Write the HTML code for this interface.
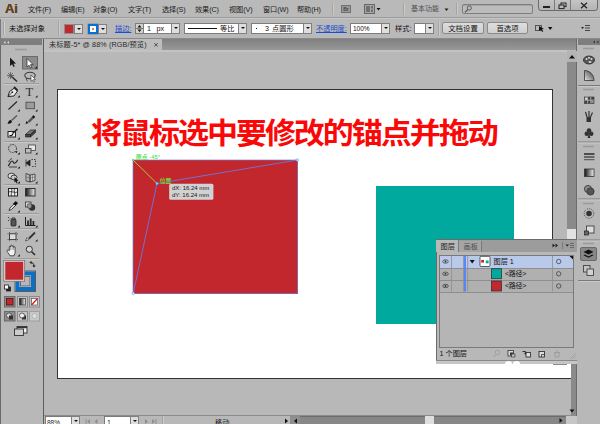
<!DOCTYPE html>
<html lang="zh-CN">
<head>
<meta charset="utf-8">
<title>Ai</title>
<style>
*{box-sizing:border-box;margin:0;padding:0}
html,body{width:600px;height:424px;overflow:hidden;background:#b8b8b8}
body{position:relative;font-family:"Liberation Sans","Noto Sans CJK SC",sans-serif;font-size:8px;color:#1a1a1a;line-height:1}
.a{position:absolute}
.t{position:absolute;white-space:nowrap;line-height:10px;font-size:8px;color:#222}
/* menu bar */
#menubar{left:0;top:0;width:600px;height:18px;background:#b9b9b9;border-bottom:1px solid #9c9c9c}
#ctrlbar{left:0;top:18px;width:600px;height:21px;background:#b9b9b9;border-top:1px solid #c6c6c6;border-bottom:1px solid #8a8a8a}
.dd{position:absolute;background:#fff;border:1px solid #7d7d7d;height:11px}
.ddb{position:absolute;background:#dedede;border:1px solid #808080;height:11px;width:9px}
.ddb:after{content:"";position:absolute;left:1.500px;top:3px;border:2px solid transparent;border-top:2.200px solid #111;border-bottom:0}
.btn{position:absolute;height:12px;border:1px solid #8a8a8a;border-radius:2px;background:linear-gradient(#dedede,#cfcfcf);text-align:center;font-size:7.4px;line-height:11.5px;color:#111}

.m{top:5px;font-size:7.2px;color:#1c1c1c;letter-spacing:-0.1px}
.c{top:23.500px;font-size:7.2px;color:#111}
.lnk{color:#1c4fd0;text-decoration:underline}
.sep{width:2px;background:#a4a4a4;border-right:1px solid #cacaca}
/* tools */
#tools{left:0;top:39px;width:43.500px;height:385px;background:#b8b8b8;border-right:1.500px solid #5c5c5c;border-left:1px solid #6a6a6a}
#toolshead{left:0;top:39px;width:42px;height:6px;background:#7e7e7e}
/* doc */
#tabbar{left:44px;top:39px;width:533px;height:11px;background:linear-gradient(#808080,#989898)}
#tab{left:44px;top:39px;width:118px;height:12px;background:#bdbdbd}
#paste{left:44px;top:50px;width:523px;height:365px;background:#b8b8b8;border-top:2px solid #c3c3c3}
#artboard{left:57px;top:89px;width:496px;height:289.500px;background:#fff;border:1px solid #333}
#vscroll{left:566.500px;top:51px;width:9.300px;height:365px;background:#8a8a8a}
#status{left:44px;top:415.300px;width:533px;height:9px;background:#b8b8b8;border-top:1px solid #8c8c8c}
#dock{left:576.300px;top:39px;width:24px;height:385px;background:#b8b8b8;border-left:1.900px solid #6c6c6c}
#dockhead{left:578px;top:39px;width:22px;height:6px;background:#7e7e7e}
#title{transform:scaleY(.94);transform-origin:0 0;left:91px;top:115.300px;font-size:31px;line-height:42px;font-weight:700;color:#fa0808;white-space:nowrap;letter-spacing:-2.02px}
/* layers */
#layers{left:435.500px;top:239px;width:141.500px;height:125px;background:#b8b8b8;border:1px solid #6a6a6a;border-right:0}
</style>
</head>
<body>
<div id="menubar" class="a"></div>
<div id="ctrlbar" class="a"></div>
<div id="tools" class="a"></div>
<div id="toolshead" class="a"></div>
<div id="tabbar" class="a"></div>
<div id="tab" class="a"></div>
<div id="paste" class="a"></div>
<div id="artboard" class="a"></div>
<div id="vscroll" class="a"></div>
<div class="a" style="left:566.5px;top:364px;width:4px;height:52px;background:#b8b8b8"></div><div class="a" style="left:552px;top:364px;width:18.500px;height:14.500px;background:#fff;border-bottom:1px solid #333"></div><div class="a" style="left:553px;top:364px;width:14px;height:1px;background:#8a8a8a"></div>
<div id="status" class="a"></div>
<div id="dock" class="a"></div>
<div id="dockhead" class="a"></div>


<!-- menu bar -->
<div class="a" style="left:5px;top:2px;font-size:13px;line-height:14px;font-weight:700;color:#64401c;letter-spacing:-0.2px;text-shadow:0 0 0.5px #64401c">Ai</div>
<div class="t m" style="left:28px">文件(F)</div>
<div class="t m" style="left:61px">编辑(E)</div>
<div class="t m" style="left:93px">对象(O)</div>
<div class="t m" style="left:128px">文字(T)</div>
<div class="t m" style="left:162px">选择(S)</div>
<div class="t m" style="left:195px">效果(C)</div>
<div class="t m" style="left:229px">视图(V)</div>
<div class="t m" style="left:263px">窗口(W)</div>
<div class="t m" style="left:297px">帮助(H)</div>
<div class="a sep" style="left:332px;top:3px;height:12px"></div>
<div class="a" style="left:341px;top:5px;width:10px;height:8px;background:#9a9a9a;border:1px solid #6f6f6f;font-size:5px;line-height:6px;text-align:center;color:#444;font-weight:700">Br</div>
<svg class="a" style="left:364px;top:4px" width="20" height="10" viewBox="0 0 20 10"><rect x="0.5" y="0.5" width="10" height="9" fill="#a8a8a8" stroke="#666"/><rect x="2" y="2" width="4" height="6" fill="#707070"/><rect x="7" y="2" width="2" height="2.5" fill="#707070"/><rect x="7" y="5.5" width="2" height="2.5" fill="#707070"/><path d="M12.5 4h4l-2 2.6z" fill="#111"/></svg>
<div class="a sep" style="left:403px;top:3px;height:12px"></div>
<div class="t" style="left:411px;top:4px;color:#4f4f4f;font-size:7px">基本功能</div>
<svg class="a" style="left:444px;top:8px" width="5" height="4"><path d="M0.5 0.5h4l-2 2.5z" fill="#222"/></svg>
<div class="a sep" style="left:456px;top:3px;height:12px"></div>
<div class="a" style="left:462px;top:4px;width:71px;height:10px;border:1px solid #7e7e7e;border-radius:2px;background:#bcbcbc;box-shadow:inset 0 1px 0 #a4a4a4"></div>
<svg class="a" style="left:464px;top:5px" width="9" height="8" viewBox="0 0 9 8"><circle cx="5.3" cy="3" r="2.1" fill="none" stroke="#555" stroke-width="0.9"/><path d="M3.8 4.6L1 7.3" stroke="#555" stroke-width="1.2"/></svg>
<div class="a" style="left:538px;top:-1px;width:60px;height:12px;border:1px solid #6c6c6c;border-radius:0 0 3px 3px;background:linear-gradient(#c4c4c4,#b4b4b4)"></div>
<div class="a" style="left:554px;top:0;width:1px;height:10px;background:#7a7a7a"></div>
<div class="a" style="left:570px;top:0;width:1px;height:10px;background:#7a7a7a"></div>
<div class="a" style="left:543px;top:6px;width:6.500px;height:1.600px;background:#222"></div>
<svg class="a" style="left:558px;top:2px" width="9" height="8" viewBox="0 0 9 8"><rect x="3" y="1" width="5" height="3.600" fill="none" stroke="#222" stroke-width="1"/><rect x="1" y="3" width="5" height="3.600" fill="#bbb" stroke="#222" stroke-width="1"/></svg>
<svg class="a" style="left:580px;top:2px" width="8" height="7" viewBox="0 0 8 7"><path d="M1 0.8L7 6.2M7 0.8L1 6.2" stroke="#222" stroke-width="1.200"/></svg>

<!-- control bar -->
<div class="a" style="left:0;top:19px;width:1px;height:20px;background:#7a7a7a"></div>
<div class="a" style="left:3px;top:22px;width:2px;height:13px;background:#a2a2a2;border-right:1px solid #cfcfcf"></div>
<div class="t c" style="left:9px">未选择对象</div>
<div class="a sep" style="left:58px;top:21px;height:15px"></div>
<div class="a" style="left:64px;top:24px;width:10px;height:10px;background:#c1272d;border:1px solid #8d8d8d"></div>
<div class="ddb" style="left:74px;top:24px;height:10px"></div>
<div class="a" style="left:88px;top:24px;width:10px;height:9.500px;background:#fff;border:2.400px solid #0a70d0;box-shadow:0 0 0 0.5px #888"></div>
<div class="a" style="left:91.700px;top:27.500px;width:2.800px;height:2.600px;background:#c4c4c4;border:.5px solid #999"></div>
<div class="ddb" style="left:98px;top:24px;height:10px"></div>
<div class="t c lnk" style="left:115px">描边:</div>
<div class="a" style="left:135px;top:23px;width:9px;height:11px;background:#d0d0d0;border:1px solid #7d7d7d"></div>
<svg class="a" style="left:135px;top:23px" width="9" height="11"><path d="M2.5 4.5h4l-2-2.6zM2.5 6.5h4l-2 2.6z" fill="#111"/><path d="M1 5.5h7" stroke="#7d7d7d" stroke-width="1"/></svg>
<div class="dd" style="left:143px;top:23px;width:29px"></div>
<div class="t c" style="left:147px;word-spacing:3.5px">1 px</div>
<div class="ddb" style="left:171px;top:23px"></div>
<div class="dd" style="left:184px;top:23px;width:55px"></div>
<div class="a" style="left:188px;top:28px;width:29px;height:1px;background:#111"></div>
<div class="t c" style="left:220px">等比</div>
<div class="ddb" style="left:238px;top:23px"></div>
<div class="dd" style="left:251px;top:23px;width:53px"></div>
<div class="a" style="left:256px;top:28px;width:1px;height:1px;background:#111"></div>
<div class="t c" style="left:265px">3</div>
<div class="t c" style="left:272px">点圆形</div>
<div class="ddb" style="left:303px;top:23px"></div>
<div class="t c lnk" style="left:316px">不透明度:</div>
<div class="dd" style="left:350px;top:23px;width:32px"></div>
<div class="t c" style="left:353px;font-size:6.5px">100%</div>
<div class="ddb" style="left:381px;top:23px"></div>
<div class="t c" style="left:395px">样式:</div>
<div class="dd" style="left:414px;top:23px;width:12px"></div>
<div class="ddb" style="left:425px;top:23px"></div>
<div class="a sep" style="left:438px;top:21px;height:15px"></div>
<div class="btn" style="left:442px;top:22px;width:42px">文档设置</div>
<div class="btn" style="left:487px;top:22px;width:41px">首选项</div>
<svg class="a" style="left:534px;top:23px" width="20" height="11" viewBox="0 0 20 11"><rect x="1.5" y="2.5" width="6" height="5" fill="none" stroke="#555" stroke-width="1"/><path d="M5 3l5 3-2 .3 1.2 2.2-1 .5-1.2-2.2L5 8z" fill="#111"/><path d="M14 4h4.4l-2.2 3z" fill="#111"/></svg>
<svg class="a" style="left:581px;top:24px" width="10" height="8" viewBox="0 0 10 8"><path d="M0 3h3l-1.5 2z" fill="#222"/><path d="M4 1.5h5M4 4h5M4 6.5h5" stroke="#444" stroke-width="1"/></svg>

<!-- doc tab -->
<div class="t" style="left:49px;top:40px;font-size:7.2px;color:#2a2a2a;letter-spacing:.12px">未标题-5* @ 88% (RGB/预览)</div>
<svg class="a" style="left:153px;top:42px" width="6" height="6"><path d="M1.2 1.200l3.600 3.300M4.800 1.200l-3.600 3.300" stroke="#3a3a3a" stroke-width=".8"/></svg>

<!-- tools panel icons -->
<svg class="a" style="left:0;top:0" width="44" height="424" viewBox="0 0 44 424">
<g id="toolicons">
<path d="M5.5 41l-2 1.5 2 1.500zM9 41l-2 1.500 2 1.500z" fill="#d8d8d8"/>
<path d="M15 49.500h12" stroke="#9a9a9a" stroke-width="1.500"/>
<!-- row1 -->
<path d="M10 57.500l6 6-2.600.2 1.400 2.600-1.300.7-1.400-2.700L10 66z" fill="#1a1a1a"/>
<rect x="22.500" y="56.500" width="15" height="12.500" fill="#8c8c8c" stroke="#6a6a6a"/>
<path d="M27 58.500l6 6-2.600.2 1.400 2.600-1.300.7-1.400-2.700L27 67z" fill="#fff" stroke="#222" stroke-width=".7"/>
<path d="M37 66.300v2.200h-2.200z" fill="#111"/>
<!-- row2 wand / lasso -->
<path d="M11 76l6 5.500" stroke="#2a2a2a" stroke-width="1.600"/>
<path d="M10.500 72v7M7 75.500h7M8 73l5 5M13 73l-5 5" stroke="#555" stroke-width=".8"/>
<ellipse cx="30" cy="75.500" rx="5.200" ry="3.300" fill="none" stroke="#3a3a3a" stroke-width="1.100"/>
<path d="M27 78c-1 1.500-.5 2.500.5 3" fill="none" stroke="#3a3a3a" stroke-width="1"/>
<path d="M31 75l4.500 4.500-2 .1 1 2-1 .5-1-2-1.500 1.300z" fill="#fff" stroke="#333" stroke-width=".6"/>
<path d="M4 83.500h35" stroke="#9c9c9c"/><path d="M4 84.500h35" stroke="#c8c8c8"/>
<!-- row3 pen / type -->
<path d="M8 96.500l1.500-5 5-3.500 3 3-3.500 5z" fill="#e8e8e8" stroke="#222" stroke-width="1"/>
<path d="M8 96.500l4-4" stroke="#222" stroke-width=".8"/><circle cx="12.300" cy="92.200" r=".9" fill="#222"/>
<path d="M14 87l3.500 3.500" stroke="#222" stroke-width="1.800"/>
<path d="M19.800 95.3v2.200h-2.200z" fill="#111"/>
<text x="25.600" y="95.500" font-family="Liberation Serif,serif" font-size="12.500" fill="#2e2e2e">T</text>
<path d="M37.500 95.3v2.200h-2.200z" fill="#111"/>
<!-- row4 line / rect -->
<path d="M8.500 109.500l8.500-8" stroke="#222" stroke-width="1.100"/>
<path d="M19.800 109.3v2.200h-2.200z" fill="#111"/>
<rect x="26" y="102.200" width="8.500" height="6.500" fill="#9c9c9c" stroke="#505050" stroke-width=".9"/>
<path d="M37.500 109.3v2.200h-2.200z" fill="#111"/>
<!-- row5 brush / pencil -->
<path d="M17 115.500l-5.500 5" stroke="#555" stroke-width="1.300"/>
<path d="M7.500 123.500c1.500.5 4 0 4.500-2l-1.500-1.500c-1.500 0-2 2-3 3.500z" fill="#111"/>
<path d="M19.800 123.3v2.200h-2.200z" fill="#111"/>
<path d="M34.300 116.200l-5.800 5.800" stroke="#555" stroke-width="2.400"/>
<path d="M34.300 116.200l-1.400 1.400" stroke="#1a1a1a" stroke-width="2.400"/>
<path d="M25.500 124l1-3 2 2z" fill="#111"/>
<path d="M37.500 123.3v2.200h-2.200z" fill="#111"/>
<!-- row6 blob / eraser -->
<rect x="8" y="131.500" width="7.500" height="5.500" fill="#eee" stroke="#222" stroke-width="1"/>
<path d="M17.500 129l-5 4.500" stroke="#222" stroke-width="1.600"/>
<path d="M9.500 135.500c1 .5 3 0 3.200-1.500" stroke="#111" stroke-width="1.200" fill="none"/>
<path d="M19.800 137.3v2.200h-2.200z" fill="#111"/>
<path d="M25.500 134.500l5-4.500h5l-5 4.500z" fill="#777" stroke="#222" stroke-width=".7"/>
<path d="M25.500 134.500h5v2.500h-5zM30.500 134.500l5-4.500v2.500l-5 4.500z" fill="#444" stroke="#222" stroke-width=".7"/>
<path d="M37.500 137.3v2.200h-2.200z" fill="#111"/>
<path d="M4 141.500h35" stroke="#9c9c9c"/><path d="M4 142.500h35" stroke="#c8c8c8"/>
<!-- row7 rotate / scale -->
<circle cx="12.500" cy="148.500" r="4" fill="none" stroke="#333" stroke-width="1" stroke-dasharray="1.600 1"/>
<path d="M15 151.500l2.500-.5-1 2.300z" fill="#111"/>
<path d="M19.800 152.3v2.200h-2.200z" fill="#111"/>
<rect x="28.500" y="145" width="7" height="5.500" fill="#e6e6e6" stroke="#444" stroke-width=".8"/>
<rect x="25.500" y="148.500" width="5.500" height="4.500" fill="#bdbdbd" stroke="#333" stroke-width=".8"/>
<path d="M37.500 152.3v2.200h-2.200z" fill="#111"/>
<!-- row8 warp / free transform -->
<path d="M8 166c2-1 2-5 4-5s1 3 3 2 2-3 3-3" fill="none" stroke="#222" stroke-width="1.100"/>
<path d="M8.500 162c1-2 2-3 3.500-3.500M9 167h8" fill="none" stroke="#333" stroke-width=".9"/>
<path d="M19.800 166.3v2.200h-2.200z" fill="#111"/>
<path d="M26 159.500v7M26 163l4-3v6z" fill="#222" stroke="#222" stroke-width=".8"/>
<path d="M31.500 159.500h4v7h-4" fill="none" stroke="#333" stroke-width="1" stroke-dasharray="1.300 1.300"/>
<!-- row9 shape builder / perspective -->
<ellipse cx="11.500" cy="176" rx="3.600" ry="2.800" fill="#ddd" stroke="#333" stroke-width=".9"/>
<ellipse cx="14" cy="177.500" rx="3" ry="2.400" fill="#ccc" stroke="#333" stroke-width=".9"/>
<path d="M14.500 177l4 4-1.800.1.900 1.900-.9.400-.9-1.900-1.300 1z" fill="#111"/>
<path d="M19.800 181.3v2.200h-2.200z" fill="#111"/>
<path d="M26 173.500l4 1.500v7l-4-1zM30 175l5-1v6.500l-5 1.500z" fill="#d0d0d0" stroke="#333" stroke-width=".8"/>
<path d="M26 177l4 1 5-1M28 174.200v7M32.500 174.500v7" stroke="#555" stroke-width=".5" fill="none"/>
<path d="M37.500 181.3v2.200h-2.200z" fill="#111"/>
<path d="M4 184.500h35" stroke="#9c9c9c"/><path d="M4 185.500h35" stroke="#c8c8c8"/>
<!-- row10 mesh / gradient -->
<rect x="8.500" y="188.500" width="9" height="7.500" fill="#eee" stroke="#222" stroke-width="1"/>
<path d="M8.500 192c3-1.500 6 1.500 9 0M11.500 188.500c1 2.500-1 5 0 7.500M14.500 188.500c-1 2.500 1 5 0 7.500" fill="none" stroke="#222" stroke-width=".8"/>
<defs><linearGradient id="gr1" x1="0" x2="1"><stop offset="0" stop-color="#111"/><stop offset="1" stop-color="#f4f4f4"/></linearGradient></defs>
<rect x="25.500" y="188.500" width="9.500" height="7.500" fill="url(#gr1)" stroke="#333" stroke-width="1"/>
<!-- row11 eyedropper / blend -->
<path d="M9 210.500l1-2.500 4-4 1.500 1.500-4 4z" fill="#ddd" stroke="#222" stroke-width=".8"/>
<path d="M13.500 203.500l2.500-2 1.500 1.500-2 2.500z" fill="#111" stroke="#111" stroke-width=".8"/>
<path d="M19.800 210.3v2.200h-2.200z" fill="#111"/>
<rect x="25.500" y="202" width="5.500" height="5" fill="#ddd" stroke="#333" stroke-width=".8"/>
<circle cx="32" cy="207.500" r="3.200" fill="#333"/>
<circle cx="29.500" cy="206" r="2.400" fill="#999" stroke="#333" stroke-width=".6"/>
<path d="M4 213.500h35" stroke="#9c9c9c"/><path d="M4 214.500h35" stroke="#c8c8c8"/>
<!-- row12 sprayer / graph -->
<rect x="11" y="219.500" width="5" height="6.500" rx="1" fill="#555" stroke="#222" stroke-width=".8"/>
<path d="M12 219.500v-1.500h3v1.500" fill="none" stroke="#222" stroke-width=".9"/>
<path d="M8 217.500h1M9.500 219h1M8 220.500h1" stroke="#333" stroke-width=".9"/>
<path d="M19.800 225.3v2.200h-2.200z" fill="#111"/>
<path d="M25.500 217v8.500h10" fill="none" stroke="#222" stroke-width="1"/>
<path d="M28 225v-4.500M30.700 225v-6.500M33.400 225v-4" stroke="#2a2a2a" stroke-width="1.800"/>
<path d="M37.500 225.3v2.200h-2.200z" fill="#111"/>
<path d="M4 228.500h35" stroke="#9c9c9c"/><path d="M4 229.500h35" stroke="#c8c8c8"/>
<!-- row13 artboard / slice -->
<rect x="9.500" y="233.800" width="6.500" height="5.800" fill="#dcdcdc" stroke="#333" stroke-width=".9"/>
<path d="M7.500 233.800h1.200M16.800 233.800h1.200M7.500 239.600h1.200M16.800 239.600h1.200M9.500 232v1M16 232v1M9.500 240.400v1M16 240.400v1" stroke="#333" stroke-width=".7"/>
<path d="M35 232.500l-6 6" stroke="#333" stroke-width="1.800"/>
<path d="M25.500 241l1.500-3.500 2 2z" fill="#eee" stroke="#333" stroke-width=".7"/>
<path d="M37.500 239.3v2.200h-2.200z" fill="#111"/>
<!-- row14 hand / zoom -->
<path d="M10 255.800c-1-2.200-3-3.800-3-5s1.200-1.200 2.300 0v-3.800c0-1.100 1.400-1.100 1.400 0v-1c0-1.100 1.500-1.100 1.500 0v.5c0-1.100 1.500-1.100 1.500 0v1c0-1.100 1.400-1.100 1.400 0v5.300l-1.100 3z" fill="#f2f2f2" stroke="#2a2a2a" stroke-width=".8"/><path d="M10.700 247v3M12.200 246.500v3.500M13.700 247v3" stroke="#555" stroke-width=".5"/>
<path d="M19.800 254.3v2.200h-2.200z" fill="#111"/>
<circle cx="29.300" cy="249.300" r="3.100" fill="#d4d4d4" stroke="#333" stroke-width="1"/>
<path d="M31.700 251.700l3.300 3.300" stroke="#2a2a2a" stroke-width="1.600"/>
<path d="M4 258.500h35" stroke="#9c9c9c"/><path d="M4 259.500h35" stroke="#c8c8c8"/>
<!-- fill / stroke -->
<rect x="15" y="271" width="20.500" height="20.500" fill="#dcdcdc" stroke="#5a5a5a" stroke-width="1"/>
<rect x="17.500" y="273.500" width="15.500" height="15.500" fill="none" stroke="#0d6fc6" stroke-width="4"/>
<rect x="20.500" y="276.500" width="9.500" height="9.500" fill="#b8b8b8" stroke="#666" stroke-width="1"/>
<rect x="4.500" y="261" width="19.500" height="19.500" fill="#c1272d" stroke="#e0e0e0" stroke-width="1.500"/>
<rect x="3.800" y="260.300" width="20.900" height="20.900" fill="none" stroke="#666" stroke-width=".7"/>
<path d="M30 262.500c3 0 4 1 4 4" fill="none" stroke="#222" stroke-width="1"/>
<path d="M31.500 260.800l-2 1.700 2 1.700zM32.300 265.500l1.700 2 1.700-2z" fill="#222"/>
<rect x="6.500" y="287" width="4" height="4" fill="#222" stroke="#222" stroke-width=".8"/>
<rect x="4.500" y="285" width="4" height="4" fill="#fff" stroke="#222" stroke-width=".8"/>
<!-- color mode buttons -->
<rect x="4.500" y="296.500" width="10.500" height="10.500" fill="#8c8c8c" stroke="#6a6a6a"/>
<rect x="6.500" y="298.500" width="6.500" height="6.500" fill="#c1272d" stroke="#4a1515" stroke-width=".8"/>
<rect x="17.500" y="296.500" width="10" height="10.500" fill="#c4c4c4" stroke="#8a8a8a"/>
<rect x="19.500" y="298.500" width="6" height="6.500" fill="url(#gr1)" stroke="#333" stroke-width=".7"/>
<rect x="29.500" y="296.500" width="10" height="10.500" fill="#c4c4c4" stroke="#8a8a8a"/>
<rect x="31.500" y="298.500" width="6" height="6.500" fill="#fff" stroke="#555" stroke-width=".7"/>
<path d="M31.500 305l6-6.500" stroke="#e01818" stroke-width="1.200"/>
<!-- draw modes -->
<rect x="4.500" y="311.500" width="10.500" height="9.500" fill="#8c8c8c" stroke="#6a6a6a"/>
<circle cx="9" cy="315.500" r="2.500" fill="#ddd" stroke="#333" stroke-width=".7"/><rect x="9" y="315.500" width="4" height="4" fill="#333"/>
<rect x="17.500" y="311.500" width="10" height="9.500" fill="#c4c4c4" stroke="#8a8a8a"/>
<rect x="22" y="315.500" width="4" height="4" fill="#333"/><circle cx="22" cy="315.500" r="2.500" fill="#eee" stroke="#333" stroke-width=".7"/>
<rect x="29.500" y="311.500" width="10" height="9.500" fill="#c8c8c8" stroke="#a0a0a0"/>
<circle cx="34.500" cy="316" r="2.500" fill="#ddd" stroke="#aaa" stroke-width=".7"/>
<!-- screen mode -->
<rect x="17" y="326.500" width="10" height="6.500" fill="#eee" stroke="#333" stroke-width=".9"/>
<rect x="14.500" y="329" width="9" height="6.500" fill="#ccc" stroke="#333" stroke-width=".9"/>
<path d="M17 327.500h10" stroke="#333" stroke-width="1.400"/>
</g>
</svg>

<!-- right dock icons -->
<svg class="a" style="left:560px;top:0" width="40" height="424" viewBox="560 0 40 424">
<path d="M595 40.500l-2 1.500 2 1.500zM598.500 40.500l-2 1.500 2 1.500z" fill="#3a3a3a"/>
<path d="M583 48.500h11" stroke="#9a9a9a" stroke-width="1.500"/>
<!-- color palette -->
<ellipse cx="589" cy="60" rx="5.500" ry="4" fill="#555" stroke="#222" stroke-width=".8"/>
<circle cx="586.500" cy="59" r="1" fill="#ddd"/><circle cx="589" cy="57.800" r="1" fill="#ddd"/><circle cx="591.500" cy="59" r="1" fill="#ddd"/><ellipse cx="590" cy="62" rx="1.600" ry="1" fill="#ccc"/>
<!-- color guide -->
<defs><linearGradient id="gr2" x1="0" x2="1" y1="1" y2="0"><stop offset="0" stop-color="#e8e8e8"/><stop offset="1" stop-color="#333"/></linearGradient></defs>
<path d="M584.500 80.500v-10c5 0 9.500 4 9.500 10z" fill="url(#gr2)" stroke="#333" stroke-width=".8"/>
<path d="M578 85.500h22" stroke="#7a7a7a"/><path d="M578 86.500h22" stroke="#c8c8c8"/>
<path d="M583 89.500h11" stroke="#9a9a9a" stroke-width="1.500"/>
<!-- swatches -->
<rect x="584.500" y="97" width="9.500" height="6.500" fill="#444" stroke="#333" stroke-width=".6"/>
<path d="M584.500 100.200h9.500M587.600 97v6.500M590.800 97v6.500" stroke="#ccc" stroke-width=".7"/>
<rect x="585" y="97.500" width="2.200" height="2.300" fill="#ddd"/><rect x="591.200" y="100.600" width="2.300" height="2.400" fill="#999"/>
<!-- brushes -->
<rect x="586.500" y="117" width="4.500" height="5" fill="#333"/>
<path d="M587 117l-1.500-5M589 117v-6M590.500 117l2-4.500" stroke="#333" stroke-width="1.200"/>
<!-- symbols (club) -->
<circle cx="589" cy="130.500" r="2.300" fill="#333"/><circle cx="586.800" cy="133.800" r="2.300" fill="#333"/><circle cx="591.200" cy="133.800" r="2.300" fill="#333"/>
<path d="M589 133l-1.500 5h3z" fill="#333"/>
<path d="M578 142h22" stroke="#7a7a7a"/><path d="M578 143h22" stroke="#c8c8c8"/>
<path d="M583 146.500h11" stroke="#9a9a9a" stroke-width="1.500"/>
<!-- stroke -->
<path d="M584 154h10.500" stroke="#333" stroke-width="1.600"/><path d="M584 157h10.500" stroke="#333" stroke-width="1.200"/><path d="M584 159.700h10.500" stroke="#333" stroke-width=".8"/>
<!-- gradient -->
<rect x="584.500" y="169" width="9.500" height="7.500" fill="url(#gr1)" stroke="#333" stroke-width=".8"/>
<!-- transparency -->
<circle cx="588" cy="189" r="3.600" fill="#888" stroke="#333" stroke-width=".8"/><circle cx="590.500" cy="191.500" r="3.600" fill="#555" stroke="#333" stroke-width=".8"/>
<path d="M578 199h22" stroke="#7a7a7a"/><path d="M578 200h22" stroke="#c8c8c8"/>
<path d="M583 203.500h11" stroke="#9a9a9a" stroke-width="1.500"/>
<!-- appearance -->
<circle cx="589" cy="213.500" r="4.800" fill="none" stroke="#444" stroke-width=".9" stroke-dasharray="1 1"/><circle cx="589" cy="213.500" r="2.800" fill="#333"/>
<!-- graphic styles -->
<rect x="586.500" y="226" width="7.500" height="7" fill="#ddd" stroke="#333" stroke-width=".8"/>
<rect x="584.500" y="231" width="4" height="4" fill="#666" stroke="#222" stroke-width=".7"/>
<path d="M578 240h22" stroke="#7a7a7a"/><path d="M578 241h22" stroke="#c8c8c8"/>
<path d="M583 243.500h11" stroke="#9a9a9a" stroke-width="1.500"/>
<!-- layers (active) -->
<rect x="580.500" y="247.500" width="16" height="13" rx="1.500" fill="#888" stroke="#6a6a6a"/>
<path d="M588.500 249.500l5 2.500-5 2.500-5-2.500z" fill="#111"/>
<path d="M583.500 255.200l1.300-.7 3.700 1.900 3.700-1.900 1.300.7-5 2.600z" fill="#111"/>
<!-- artboards -->
<rect x="583.500" y="265.500" width="6.500" height="6.500" fill="#c4c4c4" stroke="#444" stroke-width=".9"/>
<rect x="587" y="269" width="6.500" height="6.500" fill="#d2d2d2" stroke="#444" stroke-width=".9"/>
<path d="M578 280.500h22" stroke="#7a7a7a"/><path d="M578 281.500h22" stroke="#c8c8c8"/>
</svg>

<!-- scrollbars / status -->
<div class="a" style="left:567px;top:51px;width:10px;height:11px;background:#b4b4b4"></div>
<svg class="a" style="left:567px;top:51px" width="10" height="11"><path d="M2 7.500h6l-3-3.500z" fill="#111"/></svg>
<div class="a" style="left:566.5px;top:229px;width:9.300px;height:9.500px;background:#e2e2e2"></div>
<svg class="a" style="left:567px;top:405px" width="10" height="11"><path d="M2.500 4.500h5l-2.500 3z" fill="#111"/></svg>
<div class="a" style="left:45px;top:416px;width:27px;height:9px;background:#fff;border:1px solid #7a7a7a"></div>
<div class="t" style="left:47px;top:417.500px;font-size:6.500px">88%</div>
<div class="ddb" style="left:71px;top:416px"></div>
<svg class="a" style="left:84px;top:417px" width="80" height="7" viewBox="84 417 80 7"><g fill="#8e8e8e"><path d="M85.500 419h1v5h-1zM90 419v5l-3-2.500zM97.500 419v5l-3-2.500z"/><path d="M145 419v5l3-2.500zM152 419v5l3-2.500zM155.500 419h1v5h-1z"/></g></svg>
<div class="a" style="left:104px;top:416px;width:27px;height:9px;background:#fff;border:1px solid #7a7a7a"></div>
<div class="t" style="left:107px;top:417.500px;font-size:7px">1</div>
<div class="ddb" style="left:130px;top:416px"></div>
<div class="a sep" style="left:162px;top:416px;height:8px"></div>
<div class="t" style="left:215px;top:418px;font-size:7.200px;color:#222">移动</div>
<svg class="a" style="left:284px;top:417px" width="5" height="7"><path d="M1 1.500v5l3-2.500z" fill="#111"/></svg>
<div class="a" style="left:289.500px;top:416px;width:277px;height:8px;background:#878787;border-top:1px solid #6c6c6c;border-left:1px solid #6c6c6c"></div>
<div class="a" style="left:290px;top:416px;width:10px;height:8px;background:#8e8e8e"></div>
<svg class="a" style="left:292px;top:417px" width="6" height="7"><path d="M5 1.500v5l-3-2.500z" fill="#111"/></svg>
<div class="a" style="left:425px;top:416px;width:9px;height:8px;background:#dedede"></div>
<svg class="a" style="left:558px;top:417px" width="6" height="7"><path d="M1.500 1v5l3-2.500z" fill="#111"/></svg>
<div class="a" style="left:566px;top:416px;width:11px;height:8px;background:#c6c6c6"></div>
<!-- artwork -->
<div id="title" class="a">将鼠标选中要修改的锚点并拖动</div>
<div class="a" style="left:133px;top:160px;width:164.5px;height:133.5px;background:#c1272d"></div>
<div class="a" style="left:375.5px;top:185.5px;width:138px;height:138.5px;background:#00a99d"></div>


<!-- selection overlay -->
<svg class="a" style="left:120px;top:150px" width="200" height="150" viewBox="120 150 200 150">
<rect x="133" y="160" width="164.500" height="133.500" fill="none" stroke="#6f7fd8" stroke-width=".7"/>
<path d="M133.200 293.500L157 183.500 297.500 160" fill="none" stroke="#6a78e0" stroke-width=".9"/>
<path d="M133 160L157 183.500" stroke="#a8d838" stroke-width=".9"/>
<path d="M132 159l2 2M134 159l-2 2" stroke="#5fe048" stroke-width=".8"/>
<rect x="156" y="182.500" width="2" height="2" fill="#9fd6ff" stroke="#4fa0e8" stroke-width=".5"/>
<circle cx="297.300" cy="160" r="1.200" fill="#fff" stroke="#5a70e8" stroke-width=".6"/>
<circle cx="133.200" cy="293.300" r="1.200" fill="#fff" stroke="#5a70e8" stroke-width=".6"/>
<text x="135.800" y="159" font-size="5.900" font-weight="500" fill="#3fdc3a" font-family="Liberation Sans,Noto Sans CJK SC,sans-serif">原点 -45°</text>
<text x="159.700" y="182.600" font-size="5.900" font-weight="500" fill="#6fe63a" font-family="Liberation Sans,Noto Sans CJK SC,sans-serif">位置</text>
<rect x="169.200" y="183.800" width="44.200" height="16" rx="1.500" fill="#d2d2d2"/>
<text x="172" y="190.300" font-size="6" fill="#151515" font-family="Liberation Sans,sans-serif">dX: 16.24 mm</text>
<text x="172" y="197.400" font-size="6" fill="#151515" font-family="Liberation Sans,sans-serif">dY: 16.24 mm</text>
</svg>
<div id="layers" class="a"></div>
<!-- layers panel -->
<div class="a" style="left:436px;top:240px;width:141px;height:11.500px;background:#9c9c9c"></div>
<div class="a" style="left:436px;top:240px;width:23px;height:12px;background:#b8b8b8;border-right:1px solid #7a7a7a"></div>
<div class="a" style="left:459px;top:240.500px;width:23px;height:11px;background:#a6a6a6;border-right:1px solid #7a7a7a"></div>
<div class="t" style="left:440.500px;top:241.500px;font-size:7.200px;color:#222">图层</div>
<div class="t" style="left:463.500px;top:241.500px;font-size:7.200px;color:#4e4e4e">画板</div>
<svg class="a" style="left:550px;top:241px" width="27" height="9" viewBox="550 241 27 9"><path d="M552.500 243.500v4l2.500-2zM555.500 243.500v4l2.500-2z" fill="#222"/><path d="M562.500 242v7" stroke="#7a7a7a"/><path d="M565.500 244.500h3.500l-1.750 2z" fill="#222"/><path d="M570 243.500h4M570 245.500h4M570 247.500h4" stroke="#666" stroke-width=".9"/></svg>
<div class="a" style="left:439px;top:255px;width:134.500px;height:93px;background:#b5b5b5;border:1px solid #7a7a7a"></div>
<div class="a" style="left:440px;top:256px;width:133px;height:11.500px;background:#b9c9ea"></div>
<div class="a" style="left:440px;top:267.500px;width:133px;height:1px;background:#8e8e8e"></div>
<div class="a" style="left:440px;top:268.500px;width:133px;height:11px;background:#b0b0b0"></div>
<div class="a" style="left:440px;top:279.500px;width:133px;height:1px;background:#8e8e8e"></div>
<div class="a" style="left:440px;top:280.500px;width:133px;height:11px;background:#b0b0b0"></div>
<div class="a" style="left:440px;top:291.500px;width:133px;height:1px;background:#8e8e8e"></div>
<svg class="a" style="left:436px;top:252px" width="142" height="112" viewBox="436 252 142 112">
<path d="M451.500 256v35.500M463.500 256v35.500M467.700 256v35.500M552.500 256v35.500" stroke="#8e8e8e" stroke-width=".8"/>
<path d="M465 256v35.500" stroke="#4f80ff" stroke-width="1.800"/>
<g fill="none" stroke="#333" stroke-width=".7">
<ellipse cx="445.500" cy="261.500" rx="2.800" ry="1.700"/><ellipse cx="445.500" cy="273.800" rx="2.800" ry="1.700"/><ellipse cx="445.500" cy="286" rx="2.800" ry="1.700"/>
<circle cx="558.700" cy="261.500" r="2.200"/><circle cx="558.700" cy="273.800" r="2.200"/><circle cx="558.700" cy="286" r="2.200"/>
</g>
<g fill="#333"><circle cx="445.500" cy="261.500" r=".9"/><circle cx="445.500" cy="273.800" r=".9"/><circle cx="445.500" cy="286" r=".9"/></g>
<path d="M469.700 260h5l-2.500 3.500z" fill="#111"/>
<rect x="480" y="256.300" width="10" height="10.200" rx="1" fill="#fff" stroke="#333" stroke-width=".8"/>
<rect x="481.200" y="260" width="2.800" height="2.600" fill="#c1272d"/><rect x="485.800" y="260.500" width="2.800" height="2.800" fill="#00a99d"/>
<rect x="491.500" y="268.700" width="10" height="10" fill="#00a99d" stroke="#333" stroke-width=".8"/>
<rect x="491.500" y="281" width="10" height="10" fill="#c1272d" stroke="#333" stroke-width=".8"/>
<path d="M573 256v3.500l-3.500-3.500z" fill="#111"/>
<!-- bottom icons -->
<circle cx="497.500" cy="352.500" r="2.300" fill="none" stroke="#999" stroke-width=".8"/><path d="M496 354.500l-2.500 2.500" stroke="#999" stroke-width="1"/>
<rect x="508" y="350.500" width="5.500" height="5.500" fill="#ddd" stroke="#333" stroke-width=".8"/><rect x="510" y="352.500" width="3" height="3" fill="#333"/><rect x="511.500" y="354" width="3.500" height="3" fill="#bbb" stroke="#333" stroke-width=".6"/>
<path d="M522.500 351.500h3v2" fill="none" stroke="#222" stroke-width=".9"/><path d="M524 353l1.500 1.700 1.500-1.700z" fill="#222"/><rect x="526" y="352.500" width="4.500" height="4.500" fill="#ddd" stroke="#222" stroke-width=".8"/>
<rect x="539" y="351.500" width="5.500" height="5.500" fill="#ddd" stroke="#222" stroke-width=".8"/><path d="M541.500 357v-2.500h3" fill="none" stroke="#222" stroke-width=".7"/>
<path d="M554 352.500h6M555 352.500v4.500h4v-4.500M556 351h2" fill="none" stroke="#9c9c9c" stroke-width="1"/>
<path d="M576 353l-6 6M576 355.500l-3.500 3.500" stroke="#999" stroke-width=".7"/>
</svg>
<div class="t" style="left:493.500px;top:256.500px;font-size:7.200px;color:#111">图层 1</div>
<div class="t" style="left:505px;top:269px;font-size:7px;color:#111;letter-spacing:-.3px">&lt;路径&gt;</div>
<div class="t" style="left:505px;top:281px;font-size:7px;color:#111;letter-spacing:-.3px">&lt;路径&gt;</div>
<div class="t" style="left:439.500px;top:349px;font-size:7.200px;color:#111">1 个图层</div>
<div class="a" style="left:436px;top:360px;width:141px;height:4px;background:#c6c6c6;border-top:1px solid #8a8a8a"></div>
<div class="a" style="left:505px;top:360.500px;width:7px;height:6px;border-radius:50%;background:#fff"></div>
<div class="a" style="left:513px;top:361px;width:7px;height:5.500px;border-radius:50%;background:#fff"></div>

</body>
</html>
